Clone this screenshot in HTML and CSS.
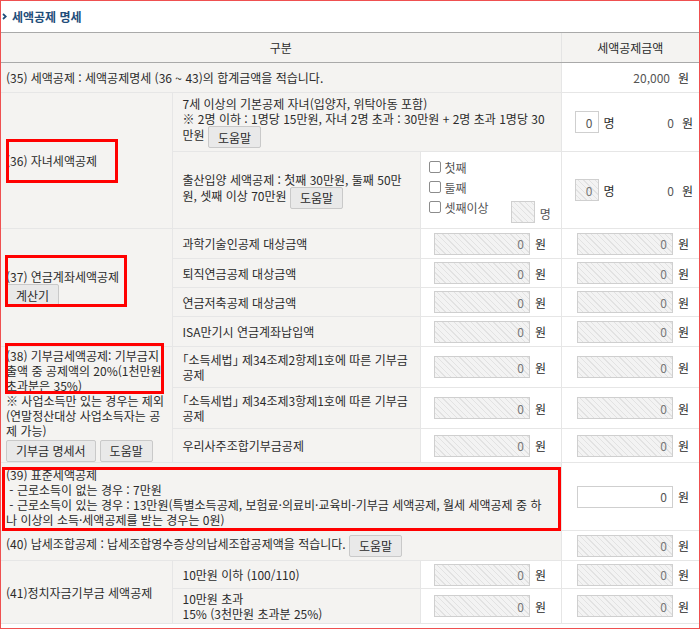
FILE: index.html
```html
<!DOCTYPE html>
<html lang="ko">
<head>
  <meta charset="UTF-8">
  <title>세액공제 명세</title>
  <link rel="stylesheet" href="styles.css">
</head>
<body>
  <div class="page">
    <h2 class="title">
      <svg class="chev" width="5" height="7" viewBox="0 0 5 7"><polyline points="1,1 3.8,3.5 1,6" fill="none" stroke="#1f4d7a" stroke-width="1.7"/></svg>
      세액공제 명세
    </h2>

    <table class="grid">
      <colgroup>
        <col class="c1"><col class="c2"><col class="c3"><col class="c4">
      </colgroup>
      <thead>
        <tr><th colspan="3">구분</th><th>세액공제금액</th></tr>
      </thead>
      <tbody>
        <tr class="h30">
          <td colspan="3">(35) 세액공제 : 세액공제명세 (36 ~ 43)의 합계금액을 적습니다.</td>
          <td class="amt w"><span class="num">20,000</span><span class="won">원</span></td>
        </tr>

        <tr class="h59">
          <td rowspan="2">(36) 자녀세액공제</td>
          <td colspan="2" class="sub">7세 이상의 기본공제 자녀(입양자, 위탁아동 포함)<br>※ 2명 이하 : 1명당 15만원, 자녀 2명 초과 : 30만원 + 2명 초과 1명당 30만원 <button class="btn">도움말</button></td>
          <td class="w">
            <div class="cnt">
              <input class="box small" type="text" value="0"><span class="unit">명</span>
              <span class="val">0</span><span class="won">원</span>
            </div>
          </td>
        </tr>
        <tr class="h77">
          <td class="sub">출산입양 세액공제 : 첫째 30만원, 둘째 50만원, 셋째 이상 70만원 <button class="btn">도움말</button></td>
          <td class="w chk">
            <label><input type="checkbox">첫째</label>
            <label><input type="checkbox">둘째</label>
            <div class="third">
              <label><input type="checkbox">셋째이상</label>
              <input class="box small ro" type="text" disabled><span class="unit">명</span>
            </div>
          </td>
          <td class="w">
            <div class="cnt">
              <input class="box small ro" type="text" value="0" disabled><span class="unit">명</span>
              <span class="val">0</span><span class="won">원</span>
            </div>
          </td>
        </tr>

        <tr class="h30">
          <td rowspan="4">(37) 연금계좌세액공제<br><button class="btn">계산기</button></td>
          <td class="sub">과학기술인공제 대상금액</td>
          <td class="inp w"><input class="box ro" type="text" value="0" disabled><span class="unit">원</span></td>
          <td class="amt w"><input class="box ro" type="text" value="0" disabled><span class="unit">원</span></td>
        </tr>
        <tr class="h29">
          <td class="sub">퇴직연금공제 대상금액</td>
          <td class="inp w"><input class="box ro" type="text" value="0" disabled><span class="unit">원</span></td>
          <td class="amt w"><input class="box ro" type="text" value="0" disabled><span class="unit">원</span></td>
        </tr>
        <tr class="h29">
          <td class="sub">연금저축공제 대상금액</td>
          <td class="inp w"><input class="box ro" type="text" value="0" disabled><span class="unit">원</span></td>
          <td class="amt w"><input class="box ro" type="text" value="0" disabled><span class="unit">원</span></td>
        </tr>
        <tr class="h30">
          <td class="sub">ISA만기시 연금계좌납입액</td>
          <td class="inp w"><input class="box ro" type="text" value="0" disabled><span class="unit">원</span></td>
          <td class="amt w"><input class="box ro" type="text" value="0" disabled><span class="unit">원</span></td>
        </tr>

        <tr class="h41">
          <td rowspan="3">(38) 기부금세액공제: 기부금지출액 중 공제액의 20%(1천만원 초과분은 35%)<br>※ 사업소득만 있는 경우는 제외(연말정산대상 사업소득자는 공제 가능)
            <div class="btns"><button class="btn">기부금 명세서</button><button class="btn">도움말</button></div>
          </td>
          <td class="sub"><span class="law">「소득세법」</span> 제34조제2항제1호에 따른 기부금 공제</td>
          <td class="inp w"><input class="box ro" type="text" value="0" disabled><span class="unit">원</span></td>
          <td class="amt w"><input class="box ro" type="text" value="0" disabled><span class="unit">원</span></td>
        </tr>
        <tr class="h41">
          <td class="sub"><span class="law">「소득세법」</span> 제34조제3항제1호에 따른 기부금 공제</td>
          <td class="inp w"><input class="box ro" type="text" value="0" disabled><span class="unit">원</span></td>
          <td class="amt w"><input class="box ro" type="text" value="0" disabled><span class="unit">원</span></td>
        </tr>
        <tr class="h34">
          <td class="sub">우리사주조합기부금공제</td>
          <td class="inp w"><input class="box ro" type="text" value="0" disabled><span class="unit">원</span></td>
          <td class="amt w"><input class="box ro" type="text" value="0" disabled><span class="unit">원</span></td>
        </tr>

        <tr class="h68">
          <td colspan="3" class="wide">(39) 표준세액공제<br>&nbsp;- 근로소득이 없는 경우 : 7만원<br>&nbsp;- 근로소득이 있는 경우 : 13만원(특별소득공제, 보험료·의료비·교육비-기부금 세액공제, 월세 세액공제 중 하나 이상의 소득·세액공제를 받는 경우는 0원)</td>
          <td class="amt w"><input class="box" type="text" value="0"><span class="unit">원</span></td>
        </tr>
        <tr class="h30">
          <td colspan="3">(40) 납세조합공제 : 납세조합영수증상의납세조합공제액을 적습니다. <button class="btn">도움말</button></td>
          <td class="amt w"><input class="box ro" type="text" value="0" disabled><span class="unit">원</span></td>
        </tr>

        <tr class="h28">
          <td rowspan="2">(41)정치자금기부금 세액공제</td>
          <td class="sub">10만원 이하 (100/110)</td>
          <td class="inp w"><input class="box ro" type="text" value="0" disabled><span class="unit">원</span></td>
          <td class="amt w"><input class="box ro" type="text" value="0" disabled><span class="unit">원</span></td>
        </tr>
        <tr class="h35">
          <td class="sub">10만원 초과<br>15% (3천만원 초과분 25%)</td>
          <td class="inp w"><input class="box ro" type="text" value="0" disabled><span class="unit">원</span></td>
          <td class="amt w"><input class="box ro" type="text" value="0" disabled><span class="unit">원</span></td>
        </tr>
      </tbody>
    </table>

    <!-- review marks drawn over the form -->
    <div class="mark m36"></div>
    <div class="mark m37"></div>
    <div class="mark m38"></div>
    <div class="mark m39"></div>
  </div>
</body>
</html>
```

FILE: styles.css
```css
* {
  box-sizing: border-box;
}

body {
  margin: 0;
  font-family: "Noto Sans CJK KR", "Noto Sans", sans-serif;
  font-size: 12px;
  color: #2b2b2b;
}

.page {
  position: relative;
  width: 700px;
  height: 629px;
  border: 1px solid #ef5050;
  overflow: hidden;
}

.title {
  margin: 0;
  height: 31px;
  display: flex;
  align-items: center;
  gap: 5px;
  padding-left: 1px;
  font-size: 12px;
  font-weight: bold;
  color: #1f4d7a;
}

.grid {
  width: 100%;
  border-collapse: collapse;
  table-layout: fixed;
}

.c1 { width: 171px; }
.c2 { width: 248px; }
.c3 { width: 141px; }
.c4 { width: 138px; }

.grid th {
  height: 30px;
  background: #f4f3f1;
  border-top: 1px solid #a9a9a9;
  border-bottom: 1px solid #a9a9a9;
  font-weight: normal;
  color: #2b2b2b;
}

.grid th + th {
  border-left: 1px solid #e4e4e4;
}

.grid td {
  border: 1px solid #e6e6e6;
  background: #f4f3f1;
  padding: 0 6px 0 5px;
  line-height: 15px;
  vertical-align: middle;
}

.grid tr > td:first-child {
  border-left: none;
}

.grid tr > td:last-child {
  border-right: none;
}

.grid td.sub {
  padding-left: 10px;
}

.grid td.wide {
  padding-right: 12px;
}

.grid td.w {
  background: #fff;
}

.law {
  font-feature-settings: "halt";
}

.h28 { height: 28px; }
.h29 { height: 29px; }
.h30 { height: 30px; }
.h34 { height: 34px; }
.h35 { height: 35px; }
.h41 { height: 41px; }
.h59 { height: 59px; }
.h68 { height: 68px; }
.h77 { height: 77px; }

.inp {
  text-align: center;
  white-space: nowrap;
}

.grid td.amt {
  text-align: right;
  padding-right: 10px;
  white-space: nowrap;
}

.btn {
  height: 22px;
  padding: 0 9px;
  margin: 0;
  font-family: inherit;
  font-size: 12px;
  color: #2b2b2b;
  background: #e9e9e9;
  border: 1px solid #c9c9c9;
  border-radius: 2px;
  vertical-align: middle;
}

.btns {
  display: flex;
  gap: 4px;
  margin-top: 2px;
}

.box {
  width: 96px;
  height: 22px;
  padding: 0 5px;
  font-family: inherit;
  font-size: 12px;
  text-align: right;
  color: #555;
  background: #fff;
  border: 1px solid #cfcfcf;
  vertical-align: middle;
}

.box.small {
  width: 24px;
}

.box.ro {
  color: #777;
  background: repeating-linear-gradient(45deg, #f3f3f3 0 3px, #e2e2e2 3px 4px);
}

.unit {
  margin-left: 5px;
  vertical-align: middle;
}

.won {
  margin-left: 8px;
}

.num,
.val {
  color: #555;
}

.cnt {
  display: flex;
  align-items: center;
  padding-left: 8px;
}

.cnt .val {
  margin-left: auto;
}

.chk {
  padding-left: 8px !important;
  color: #555;
}

.chk label {
  display: flex;
  align-items: center;
  gap: 4px;
  height: 20px;
}

.chk input[type="checkbox"] {
  appearance: none;
  width: 12px;
  height: 12px;
  margin: 0;
  border: 1px solid #8c8c8c;
  border-radius: 2px;
  background: #fff;
}

.third {
  display: flex;
  align-items: flex-start;
}

.third .box {
  margin-left: 22px;
  margin-top: 4px;
}

.third .unit {
  margin-top: 9px;
}

.mark {
  position: absolute;
  border: 3px solid #f00;
}

.m36 { left: 5px; top: 138px; width: 112px; height: 44px; }
.m37 { left: 4px; top: 254px; width: 122px; height: 52px; }
.m38 { left: 4px; top: 342px; width: 159px; height: 51px; }
.m39 { left: 1px; top: 466px; width: 559px; height: 64px; }
```
